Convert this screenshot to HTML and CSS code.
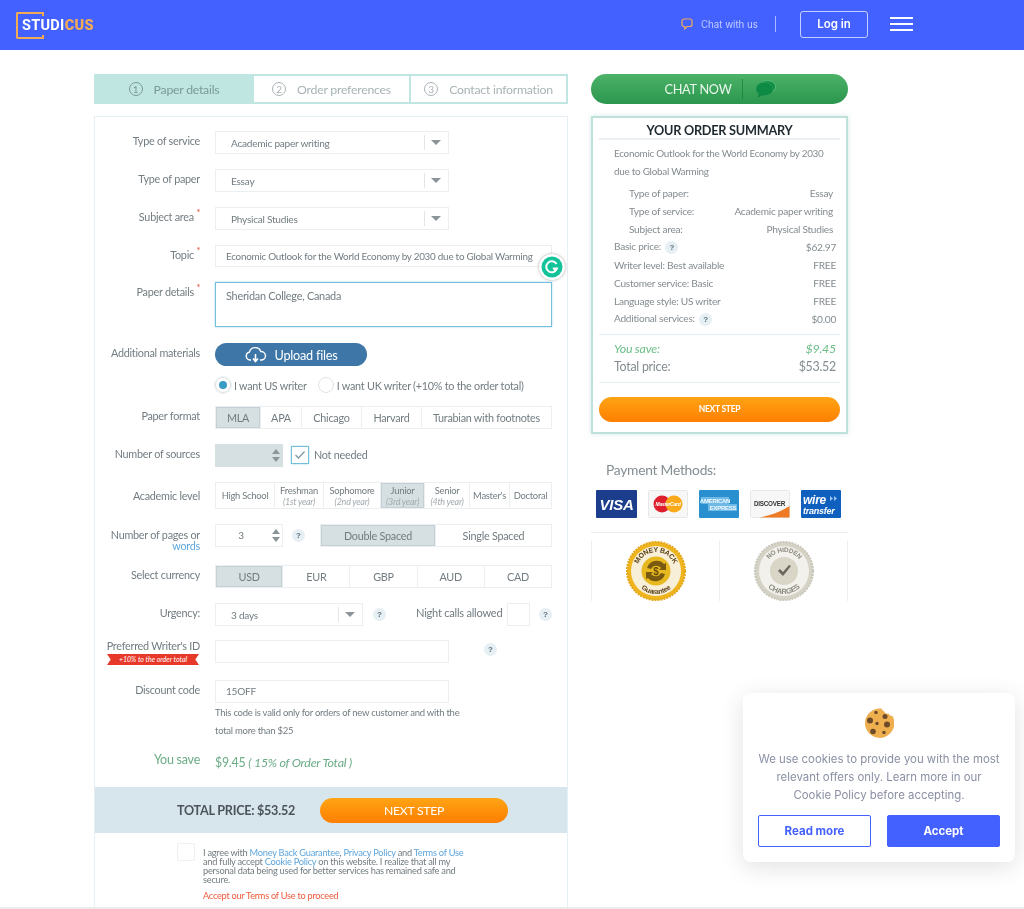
FILE: index.html
```html
<!DOCTYPE html>
<html lang="en">
<head>
<meta charset="utf-8">
<title>Studicus order form</title>
<link rel="stylesheet" href="styles.css">
</head>
<body>
<div class="page">
<header class="topbar">
  <a class="logo"><span class="logo-text">STUDI<b>CUS</b></span></a>
  <div class="top-right">
    <svg class="chat-ico" width="12" height="12" viewBox="0 0 12 12"><path d="M3 1h6A2 2 0 0 1 11 3v3.500A2 2 0 0 1 9 8.500H6L3.800 10.800V8.500H3A2 2 0 0 1 1 6.500V3A2 2 0 0 1 3 1z" fill="none" stroke="#f0a95a" stroke-width="1.200"/></svg>
    <span class="chat-text">Chat with us</span>
    <span class="top-sep"></span>
    <a class="login">Log in</a>
    <span class="burger"><i></i><i></i><i></i></span>
  </div>
</header>

<main class="content">
  <section class="left">
    <nav class="steps">
      <div class="step step-on"><span class="num">1</span>Paper details</div>
      <div class="step step-2"><span class="num">2</span>Order preferences</div>
      <div class="step step-3"><span class="num">3</span>Contact information</div>
    </nav>
    <form class="card">
      <div class="fields">
        <div class="row"><label class="lab">Type of service</label><div class="select"><span>Academic paper writing</span><em></em></div></div>
        <div class="row"><label class="lab">Type of paper</label><div class="select"><span>Essay</span><em></em></div></div>
        <div class="row"><label class="lab">Subject area <sup>*</sup></label><div class="select"><span>Physical Studies</span><em></em></div></div>
        <div class="row row-topic"><label class="lab">Topic <sup>*</sup></label><div class="input wide">Economic Outlook for the World Economy by 2030 due to Global Warming</div>
          <span class="grammarly"><svg width="22" height="22" viewBox="0 0 22 22"><circle cx="11" cy="11" r="10.500" fill="#15c39a"/><path d="M15.500 8A5.500 5.500 0 1 0 16 12.500H11.800" fill="none" stroke="#fff" stroke-width="2"/><path d="M14 13v3" stroke="#fff" stroke-width="2"/></svg></span></div>
        <div class="row row-details"><label class="lab">Paper details <sup>*</sup></label><div class="textarea">Sheridan College, Canada</div></div>
        <div class="row"><label class="lab">Additional materials</label><a class="upload"><svg width="22" height="16" viewBox="0 0 22 16"><path d="M6 13H5a4 4 0 0 1-.6-7.900A6 6 0 0 1 15.800 4.500 4.300 4.300 0 0 1 17 13h-2" fill="none" stroke="#fff" stroke-width="1.400"/><path d="M10.500 7v7M8 11.500l2.500 3 2.500-3" fill="none" stroke="#fff" stroke-width="1.600"/></svg>Upload files</a></div>
        <div class="row row-radios"><span class="lab"></span><span class="radio radio-on"></span><span class="radio-text us">I want US writer</span><span class="radio"></span><span class="radio-text">I want UK writer (+10% to the order total)</span></div>
        <div class="row"><label class="lab">Paper format</label>
          <div class="seg">
            <span class="on w45">MLA</span><span class="w41">APA</span><span class="w60">Chicago</span><span class="w60">Harvard</span><span class="grow">Turabian with footnotes</span>
          </div></div>
        <div class="row"><label class="lab">Number of sources</label><div class="spin spin-off"><i class="up"></i><i class="down"></i></div><span class="check"><svg width="12" height="10" viewBox="0 0 12 10"><path d="M1.500 5l3 3L10.500 1.500" fill="none" stroke="#7f9aa8" stroke-width="1.300"/></svg></span><span class="check-text">Not needed</span></div>
        <div class="row row-level"><label class="lab">Academic level</label>
          <div class="seg seg-level">
            <span class="w59">High School</span><span class="w49">Freshman<small>(1st year)</small></span><span class="w57">Sophomore<small>(2nd year)</small></span><span class="on w44">Junior<small>(3rd year)</small></span><span class="w45">Senior<small>(4th year)</small></span><span class="w40">Master's</span><span class="grow">Doctoral</span>
          </div></div>
        <div class="row"><label class="lab lab-2">Number of pages or <a>words</a></label><div class="spin">3<i class="up"></i><i class="down"></i></div><span class="help help-pages">?</span>
          <div class="seg seg-space"><span class="on half">Double Spaced</span><span class="half">Single Spaced</span></div></div>
        <div class="row row-cur"><label class="lab">Select currency</label>
          <div class="seg seg-cur"><span class="on">USD</span><span>EUR</span><span>GBP</span><span>AUD</span><span>CAD</span></div></div>
        <div class="row"><label class="lab">Urgency:</label><div class="select select-short"><span>3 days</span><em></em></div><span class="help help-urg">?</span><span class="night">Night calls allowed</span><span class="night-box"></span><span class="help help-night">?</span></div>
        <div class="row row-writer"><label class="lab lab-writer">Preferred Writer's ID<b class="ribbon">+10% to the order total</b></label><div class="input mid"></div><span class="help help-writer">?</span></div>
        <div class="row row-disc"><label class="lab">Discount code</label><div class="input mid">15OFF</div></div>
      </div>
      <p class="note">This code is valid only for orders of new customer and with the total more than $25</p>
      <div class="saved"><span class="lab">You save</span><span class="saved-val">$9.45 <i>( 15% of Order Total )</i></span></div>
      <div class="totalbar"><strong>TOTAL PRICE: $53.52</strong><a class="btn-next">NEXT STEP</a></div>
      <div class="agree">
        <span class="agree-box"></span>
        <div class="agree-text">
          <p>I agree with <a>Money Back Guarantee</a>, <a>Privacy Policy</a> and <a>Terms of Use</a> and fully accept <a>Cookie Policy</a> on this website. I realize that all my personal data being used for better services has remained safe and secure.</p>
          <p class="warn">Accept our Terms of Use to proceed</p>
        </div>
      </div>
    </form>
  </section>

  <aside class="right">
    <a class="chatnow"><span>CHAT NOW</span><i></i><svg width="22" height="18" viewBox="0 0 22 18"><path d="M8 1.500C10 .5 14 .3 17 1.800c3.500 1.800 4.300 5.400 2.500 8.200-.4.600-1 1.200-1.600 1.600" fill="#0d8a43" stroke="#6ecb8c" stroke-width=".7"/><ellipse cx="9.500" cy="9" rx="8.800" ry="6.800" fill="#0d8a43" stroke="#3fa862" stroke-width=".6"/><path d="M4 13l-1.500 4.500L9 15z" fill="#0d8a43"/></svg></a>
    <div class="summary">
      <h2>YOUR ORDER SUMMARY</h2>
      <p class="sum-topic">Economic Outlook for the World Economy by 2030 due to Global Warming</p>
      <ul class="sum-sub">
        <li><span>Type of paper:</span><span>Essay</span></li>
        <li><span>Type of service:</span><span>Academic paper writing</span></li>
        <li><span>Subject area:</span><span>Physical Studies</span></li>
      </ul>
      <ul class="sum-list">
        <li><span>Basic price: <b class="help help-in">?</b></span><span>$62.97</span></li>
        <li><span>Writer level: Best available</span><span>FREE</span></li>
        <li><span>Customer service: Basic</span><span>FREE</span></li>
        <li><span>Language style: US writer</span><span>FREE</span></li>
        <li><span>Additional services: <b class="help help-in">?</b></span><span>$0.00</span></li>
      </ul>
      <div class="sum-total">
        <div class="sum-save"><span>You save:</span><span>$9.45</span></div>
        <div class="sum-price"><span>Total price:</span><span>$53.52</span></div>
      </div>
      <a class="btn-small">NEXT STEP</a>
    </div>
    <h3 class="pay-title">Payment Methods:</h3>
    <div class="pay">
      <svg width="41" height="28" viewBox="0 0 41 28"><rect width="41" height="28" rx="1" fill="#1c3d8c"/><text x="20.500" y="19.500" text-anchor="middle" font-family="Liberation Sans" font-size="15" font-weight="700" font-style="italic" fill="#fff">VISA</text></svg>
      <svg width="40" height="28" viewBox="0 0 40 28"><rect x=".5" y=".5" width="39" height="27" rx="1" fill="#f7f7f7" stroke="#e8e8e8"/><circle cx="14" cy="14" r="8.500" fill="#dd1f2e"/><circle cx="26" cy="14" r="8.500" fill="#f9a91a"/><text x="20" y="16" text-anchor="middle" font-family="Liberation Sans" font-size="5" font-weight="700" font-style="italic" fill="#fff">MasterCard</text></svg>
      <svg width="40" height="28" viewBox="0 0 40 28"><rect width="40" height="28" rx="1" fill="#2a8fce"/><rect x="2" y="7" width="28" height="7" fill="#6fb9e6"/><rect x="9" y="14" width="29" height="7" fill="#6fb9e6"/><text x="16" y="13" text-anchor="middle" font-family="Liberation Sans" font-size="6" font-weight="700" fill="#f2faff">AMERICAN</text><text x="24" y="20" text-anchor="middle" font-family="Liberation Sans" font-size="6" font-weight="700" fill="#f2faff">EXPRESS</text></svg>
      <svg width="40" height="28" viewBox="0 0 40 28"><rect x=".5" y=".5" width="39" height="27" rx="1" fill="#f7f7f7" stroke="#e8e8e8"/><path d="M10 27.500C22 25 32 21 39.500 16v11.500z" fill="#ee7a24"/><text x="19.500" y="16" text-anchor="middle" font-family="Liberation Sans" font-size="6.300" font-weight="700" fill="#333">DISCOVER</text></svg>
      <svg width="40" height="28" viewBox="0 0 40 28"><rect width="40" height="28" rx="1" fill="#0f5fbe"/><text x="2" y="13.500" font-family="Liberation Sans" font-size="12" font-weight="700" font-style="italic" fill="#fff">wire</text><text x="2" y="23.500" font-family="Liberation Sans" font-size="9" font-weight="700" font-style="italic" fill="#fff">transfer</text><path d="M29 6l3 2.500-3 2.500zM33 6l3 2.500-3 2.500z" fill="#9cc4ee"/></svg>
    </div>
    <div class="badges">
      <div class="badge">
        <svg width="60" height="60" viewBox="0 0 60 60"><circle cx="30" cy="30" r="29" fill="#eeb51f" stroke="#e3a514" stroke-width="2" stroke-dasharray="2 1"/><circle cx="30" cy="30" r="25" fill="#f8efd8"/><circle cx="30" cy="30" r="14.500" fill="#e8b820"/><path d="M21 27a10 10 0 0 1 17-4l2-1v7h-7l2-2a6 6 0 0 0-10 1zM39 33a10 10 0 0 1-17 4l-2 1v-7h7l-2 2a6 6 0 0 0 10-1z" fill="#7a5a10"/><text x="30" y="34" text-anchor="middle" font-family="Liberation Sans" font-size="10" font-weight="700" fill="#6a4c08">$</text><path id="mb" d="M11 30a19 19 0 0 1 38 0" fill="none"/><text font-family="Liberation Sans" font-size="7" font-weight="700" fill="#5b431a"><textPath href="#mb" startOffset="50%" text-anchor="middle">MONEY BACK</textPath></text><path id="gb" d="M7 30a23 23 0 0 0 46 0" fill="none"/><text font-family="Liberation Sans" font-size="7" font-weight="700" fill="#5b431a"><textPath href="#gb" startOffset="50%" text-anchor="middle">Guarantee</textPath></text></svg>
      </div>
      <div class="badge">
        <svg width="60" height="60" viewBox="0 0 60 60"><circle cx="30" cy="30" r="29" fill="#d5d2c6" stroke="#c9c6b9" stroke-width="2" stroke-dasharray="2 1"/><circle cx="30" cy="30" r="25" fill="#f2f1ec"/><circle cx="30" cy="30" r="14" fill="#d9d6c8"/><path d="M24 30l5 5 8-10-2-1-6 7-3-3z" fill="#6a675c"/><path id="nh" d="M11 30a19 19 0 0 1 38 0" fill="none"/><text font-family="Liberation Sans" font-size="6.500" font-weight="700" fill="#8d8a7e"><textPath href="#nh" startOffset="50%" text-anchor="middle">NO HIDDEN</textPath></text><path id="ch" d="M7 30a23 23 0 0 0 46 0" fill="none"/><text font-family="Liberation Sans" font-size="7.500" font-weight="700" fill="#8d8a7e"><textPath href="#ch" startOffset="50%" text-anchor="middle">CHARGES</textPath></text></svg>
      </div>
    </div>
  </aside>
</main>

<div class="cookie">
  <svg class="cookie-ico" width="30" height="30" viewBox="0 0 30 30"><path d="M15 0.500c1 0 2 .1 3 .3.300 1.500 1 2.500 2 2.200.300 2 2.500 3 4.500 2.500.5 1.500 2 2.500 4 2.500A14.700 14.700 0 1 1 15 .5z" fill="#eeb04f"/><g fill="#6d4a2a"><circle cx="12" cy="4.500" r="1.700"/><circle cx="21" cy="8.500" r="2.500"/><circle cx="6" cy="12.500" r="3"/><circle cx="13" cy="15.500" r="1.700"/><circle cx="23" cy="16.500" r="3"/><circle cx="9" cy="23.500" r="2.800"/><circle cx="20" cy="24.500" r="1.700"/></g></svg>
  <p>We use cookies to provide you with the most relevant offers only. Learn more in our Cookie Policy before accepting.</p>
  <div class="cookie-btns"><a class="ck-read">Read more</a><a class="ck-accept">Accept</a></div>
</div>
</div>
</body>
</html>
```
FILE: styles.css
```css
* { box-sizing: border-box; }
html, body { margin: 0; padding: 0; }
body { font-family: "Lato", "Liberation Sans", sans-serif; color: #727c81; background: #fff; letter-spacing: -.25px; }
a { color: inherit; text-decoration: none; }
p, h2, h3, ul { margin: 0; padding: 0; }
ul { list-style: none; }

.page { height: 909px; overflow: hidden; position: relative; border-bottom: 2px solid #ececec; filter: blur(.3px); }

.topbar { height: 50px; background: #4361ff; display: flex; align-items: center; justify-content: space-between; padding: 0 111px 0 16px; letter-spacing: 0; }
.logo { width: 28px; height: 27px; border: 2px solid #f2ab55; border-right-color: transparent; border-radius: 2px; display: flex; align-items: center; position: relative; }
.logo::after { content: ""; position: absolute; right: -2px; top: -2px; width: 2px; height: 4px; background: #f2ab55; box-shadow: 0 23px 0 #f2ab55; }
.logo-text { font: 700 14.500px "Roboto", sans-serif; color: #fff; padding-left: 4px; letter-spacing: .3px; }
.logo-text b { color: #f2ab55; }
.top-right { display: flex; align-items: center; margin-top: -2px; }
.chat-ico { margin-right: 8px; }
.chat-text { font: 400 9.700px "Inter", sans-serif; color: #c3cdff; width: 74px; }
.top-sep { width: 1px; height: 16px; background: #aab8ff; }
.login { margin-left: 24px; width: 68px; height: 27px; border: 1px solid #c5cfff; border-radius: 3px; font: 600 11.500px/25px "Inter", sans-serif; color: #fff; text-align: center; }
.burger { margin-left: 22px; width: 23px; display: flex; flex-direction: column; gap: 4px; }
.burger i { height: 1.700px; background: #fff; }

.content { display: flex; align-items: flex-start; gap: 23px; padding: 24px 0 0 94px; }
.left { width: 474px; }

.steps { display: flex; height: 30px; border: 2px solid #bfe6e0; font-size: 12.300px; color: #a9b3b5; }
.step { display: flex; align-items: center; justify-content: center; border-right: 2px solid #bfe6e0; }
.step-on { width: 158px; background: #bfe6e0; color: #7b9a9a; }
.step-2 { width: 157px; }
.step-3 { flex: 1; border-right: 0; }
.num { width: 14px; height: 14px; border: 1px solid currentColor; border-radius: 50%; font-size: 10px; line-height: 12px; text-align: center; margin-right: 11px; letter-spacing: 0; }

.card { margin-top: 12px; border: 1px solid #e6eff3; border-bottom: 0; height: 800px; }
.fields { display: flex; flex-direction: column; gap: 15px; padding-top: 14px; }
.row { display: flex; align-items: flex-start; height: 23px; position: relative; font-size: 10.800px; }
.lab { width: 105px; margin-right: 15px; flex: none; text-align: right; font-size: 10.800px; line-height: 20px; color: #727c81; }
.lab sup { color: #e8402f; font-size: 9px; line-height: 0; }
.lab-2 { line-height: 11px; padding-top: 5px; }
.lab-2 a { color: #5fa6dd; display: block; }
.select { width: 234px; height: 23px; border: 1px solid #ebeff1; display: flex; align-items: center; padding-left: 15px; position: relative; color: #727c81; font-size: 10.100px; }
.select em { position: absolute; right: 0; top: 3px; width: 24px; height: 15px; border-left: 1px solid #e3e6e8; }
.select em::after { content: ""; position: absolute; left: 6px; top: 5px; border: 5px solid transparent; border-top: 5px solid #8b9499; border-bottom: 0; }
.select-short { width: 148px; }
.input { height: 23px; border: 1px solid #ebeff1; padding: 0 10px; line-height: 21px; font-size: 10.100px; white-space: nowrap; }
.wide { width: 337px; font-size: 9.900px; }
.mid { width: 234px; }
.row-topic { height: 22px; }
.row-topic .input { height: 22px; line-height: 20px; }
.grammarly { position: absolute; left: 444px; top: 9px; width: 26px; height: 26px; border-radius: 50%; background: #fff; box-shadow: 0 0 3px rgba(0,0,0,.35); display: flex; align-items: center; justify-content: center; z-index: 2; }
.row-details { height: 45px; margin-bottom: 1px; }
.textarea { width: 337px; height: 45px; border: 1px solid #75bfdc; box-shadow: 0 0 2px #a6d8ea; padding: 5px 10px; font-size: 10.900px; line-height: 16px; }
.upload { width: 152px; height: 23px; border-radius: 12px; background: #3d76a7; color: #fff; font-size: 12.700px; display: flex; align-items: center; justify-content: center; gap: 8px; padding-top: 1px; }
.row-radios { height: 18px; margin-top: -5px; margin-bottom: -3px; align-items: center; }
.radio { width: 16px; height: 16px; border: 1px solid #dfe3e5; border-radius: 50%; flex: none; position: relative; }
.radio-on { box-shadow: 0 0 0 1px #e8eef1; }
.radio-on::after { content: ""; position: absolute; left: 3px; top: 3px; width: 8px; height: 8px; border-radius: 50%; background: #3a9cc5; }
.radio-text { margin-left: 3px; font-size: 10.800px; white-space: nowrap; }
.us { margin-right: 11px; }
.seg { display: flex; width: 337px; height: 23px; border: 1px solid #ebeff1; font-size: 10.800px; }
.seg span { display: flex; flex-direction: column; align-items: center; justify-content: center; border-right: 1px solid #ebeff1; line-height: 11px; white-space: nowrap; }
.seg span:last-child { border-right: 0; }
.seg .on { background: #d6dfe2; box-shadow: inset 0 0 0 1px #c6d0d4; }
.seg .grow { flex: 1; }
.w45 { width: 45px; } .w41 { width: 41px; } .w60 { width: 60px; }
.w59 { width: 59px; } .w49 { width: 49px; } .w57 { width: 57px; } .w44 { width: 44px; } .w40 { width: 40px; }
.spin { width: 68px; height: 23px; border: 1px solid #ebeff1; text-align: center; line-height: 21px; padding-right: 16px; position: relative; font-size: 10px; }
.spin-off { background: #d6dfe2; border-color: #d6dfe2; }
.spin i { position: absolute; right: 2px; border: 4px solid transparent; }
.spin .up { top: 4px; border-bottom: 5px solid #8b9499; border-top: 0; }
.spin .down { top: 12px; border-top: 5px solid #8b9499; border-bottom: 0; }
.check { width: 18px; height: 18px; border: 1px solid #75bfdc; box-shadow: 0 0 2px #a6d8ea; margin: 2px 5px 0 8px; display: flex; align-items: center; justify-content: center; }
.check-text { line-height: 22px; }
.row-level { height: 27px; }
.row-level .lab { padding-top: 4px; }
.seg-level { height: 27px; font-size: 9.400px; }
.seg-level small { font-size: 9px; font-style: italic; color: #a3abaf; }
.help { display: inline-block; width: 13px; height: 13px; border-radius: 50%; background: #e6eff4; color: #5f6f7a; font: 700 8px/13px "Liberation Sans", sans-serif; letter-spacing: 0; text-align: center; flex: none; }
.help-pages { margin: 5px 15px 0 9px; }
.seg-space { width: 232px; }
.half { width: 50%; }
.row-cur { margin-top: 3px; }
.seg-cur span { flex: 1; }
.help-urg { margin: 5px 0 0 10px; }
.night { position: absolute; left: 321px; font-size: 11.100px; line-height: 20px; white-space: nowrap; }
.night-box { position: absolute; left: 412px; width: 23px; height: 23px; border: 1px solid #ebeff1; }
.help-night { position: absolute; left: 444px; top: 5px; }
.help-writer { margin: 3px 0 0 35px; }
.row-writer { margin-top: -1px; }
.lab-writer { line-height: 11px; }
.ribbon { display: block; width: 92px; margin: 3px 0 0 12px; height: 11px; background: #e6392a; color: #fff; font: italic 400 7px/11px "Lato", sans-serif; letter-spacing: 0; text-align: center; clip-path: polygon(0 0, 100% 0, 96% 50%, 100% 100%, 0 100%, 4% 50%); }
.row-disc { margin-top: 2px; }
.note { margin: 1px 0 0 120px; width: 250px; font-size: 9.500px; line-height: 18px; }
.saved { display: flex; margin-top: 10px; color: #6cac86; height: 30px; }
.saved .lab { color: #6cac86; font-size: 12.500px; }
.saved-val { font-size: 12.400px; line-height: 26px; }
.totalbar { height: 46px; margin-top: 7px; background: #d7e5ec; display: flex; align-items: center; padding-left: 82px; }
.totalbar strong { width: 143px; font-size: 12.600px; color: #4b5459; white-space: nowrap; }
.btn-next { width: 188px; height: 25px; border-radius: 13px; background: linear-gradient(#ffa414, #ff7f00); color: #fff; font-size: 12.200px; line-height: 25px; text-align: center; }
.agree { display: flex; padding: 10px 0 0 82px; }
.agree-box { width: 18px; height: 18px; border: 1px solid #eef1f2; margin-right: 8px; flex: none; }
.agree-text { width: 266px; padding-top: 5px; font-size: 9.250px; line-height: 9px; color: #727c81; }
.agree-text a { color: #5fa6dd; }
.warn { color: #ef5a3c; margin-top: 6px; line-height: 12px; font-size: 9.200px; }

.right { width: 257px; }
.chatnow { height: 30px; border-radius: 15px; background: linear-gradient(#4cb368, #2b964e); display: flex; align-items: center; justify-content: center; color: #e8f6ec; font-size: 12.700px; padding-left: 2px; }
.chatnow i { width: 1px; height: 20px; background: #1e8a43; margin: 0 12px 0 10px; }
.summary { margin-top: 12px; height: 318px; border: 2px solid #bfe1dc; box-shadow: 0 0 5px rgba(180,215,210,.5); padding: 0 6px; font-size: 10.100px; color: #848c90; }
.summary h2 { font-size: 12.700px; font-weight: 700; color: #1f2a30; text-align: center; height: 22px; line-height: 24px; border-bottom: 2px solid #eaf0f3; }
.sum-topic { padding: 4px 8px 0 15px; font-size: 9.900px; line-height: 18px; }
.sum-sub { padding: 4px 7px 0 30px; }
.sum-list { padding: 0 4px 0 15px; }
.summary li { display: flex; justify-content: space-between; align-items: center; height: 18px; white-space: nowrap; }
.help-in { margin-left: 2px; }
.sum-total { margin-top: 6px; padding: 5px 4px 6px 15px; border-top: 1px solid #e2ecf1; border-bottom: 1px solid #e8eff2; }
.sum-save, .sum-price { display: flex; justify-content: space-between; height: 18px; line-height: 18px; font-size: 12.400px; }
.sum-save { color: #6dbd88; font-style: italic; }
.btn-small { display: block; margin-top: 14px; height: 25px; border-radius: 13px; background: linear-gradient(#ffa414, #ff7f00); color: #fff; font-size: 8.500px; font-weight: 700; line-height: 25px; text-align: center; }
.pay-title { font-size: 13.800px; font-weight: 400; margin: 27px 0 0 15px; line-height: 18px; color: #848d91; }
.pay { display: flex; padding: 11px 0 0 5px; gap: 11px; height: 54px; border-bottom: 1px solid #ececec; }
.badges { display: flex; margin-top: 8px; height: 60px; }
.badge { flex: 1; display: flex; justify-content: center; border-left: 1px solid #eceeef; }
.badge:last-child { border-right: 1px solid #eceeef; }

.cookie { position: absolute; left: 743px; top: 693px; width: 272px; height: 169px; background: #fff; border-radius: 8px; box-shadow: 0 5px 24px rgba(0,0,0,.12); padding: 15px 15px 0; text-align: center; letter-spacing: 0; }
.cookie-ico { display: block; margin: 0 auto; }
.cookie p { font: 400 11.400px/18px "Inter", sans-serif; color: #8a8fa3; margin: 12px -1px 0; }
.cookie-btns { display: flex; justify-content: space-between; margin-top: 11px; }
.cookie-btns a { width: 113px; height: 32px; border-radius: 2px; font: 700 11.500px/30px "Inter", sans-serif; }
.ck-read { border: 1px solid #4361ff; color: #4361ff; }
.ck-accept { border: 1px solid #4361ff; background: #4361ff; color: #fff; }
```
